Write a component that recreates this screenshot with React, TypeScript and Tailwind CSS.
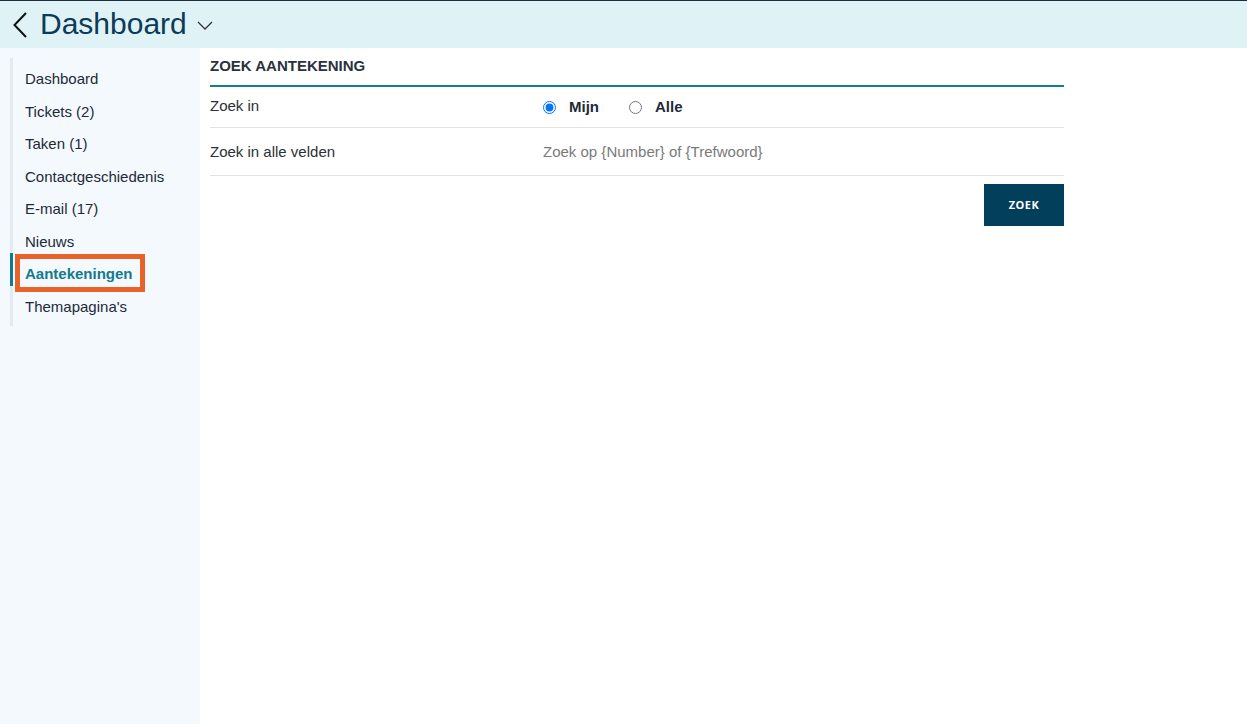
import { useState } from "react";

const items = [
  "Dashboard",
  "Tickets (2)",
  "Taken (1)",
  "Contactgeschiedenis",
  "E-mail (17)",
  "Nieuws",
  "Aantekeningen",
  "Themapagina's",
];

export default function App() {
  const [scope, setScope] = useState<string>("mijn");
  const active = "Aantekeningen";

  return (
    <div className="min-h-[724px] flex flex-col bg-white font-['Liberation_Sans',Arial,sans-serif]">
      {/* header */}
      <header className="h-[48px] border-t border-[#1c2b3a] bg-[#dff3f7] flex items-center">
        <svg width="40" height="47" viewBox="0 0 40 47" className="shrink-0">
          <path d="M26 12 L14.5 24 L26 36" fill="none" stroke="#111" strokeWidth="2" />
        </svg>
        <h1 className="text-[30px] leading-[36px] text-[#0d3b57] -mt-[2px]">Dashboard</h1>
        <svg width="26" height="20" viewBox="0 0 26 20" className="shrink-0 mt-[2px]">
          <path d="M11 6 L18 13 L25 6" fill="none" stroke="#333" strokeWidth="1.3" />
        </svg>
      </header>

      <div className="flex flex-1">
        {/* sidebar */}
        <aside className="w-[200px] shrink-0 bg-[#f3f9fd] pt-[10px] pl-[10px]">
          <nav className="border-l-[3px] border-[#e6eaee] pb-[8px]">
            {items.map((item) => (
              <div key={item} className="relative">
                <a
                  href="#"
                  className={
                    item === active
                      ? "block h-[32.5px] pt-[9px] pl-[12px] -ml-[3px] border-l-[3px] border-[#0f7c95] text-[15px] leading-[23px] font-bold text-[#137a8f]"
                      : "block h-[32.5px] pt-[9px] pl-[12px] text-[15px] leading-[23px] text-[#1e2a3a]"
                  }
                >
                  {item}
                </a>
                {item === active && (
                  <div className="absolute left-[2px] top-[1px] w-[130px] h-[38px] border-[5px] border-[#e8632a] pointer-events-none" />
                )}
              </div>
            ))}
          </nav>
        </aside>

        {/* main */}
        <main className="flex-1 pl-[10px]">
          <div className="w-[854px]">
            <div className="pt-[8px] pb-[9px] border-b-2 border-[#137f97]">
              <h2 className="text-[15px] leading-[20px] font-bold text-[#2a3140]">ZOEK AANTEKENING</h2>
            </div>

            <div className="grid grid-cols-[333px_1fr] h-[41px] items-center border-b border-[#e3e3e3] text-[15px] text-[#2b2f36]">
              <span className="-mt-[2px]">Zoek in</span>
              <div className="flex items-center">
                <label className="flex items-center gap-[13px] cursor-pointer">
                  <input
                    type="radio"
                    name="scope"
                    checked={scope === "mijn"}
                    onChange={() => setScope("mijn")}
                    className="m-0 w-[13px] h-[13px] accent-[#0075ff]"
                  />
                  <span className="font-bold text-[#1e2a3a]">Mijn</span>
                </label>
                <label className="flex items-center gap-[13px] ml-[30px] cursor-pointer">
                  <input
                    type="radio"
                    name="scope"
                    checked={scope === "alle"}
                    onChange={() => setScope("alle")}
                    className="m-0 w-[13px] h-[13px] accent-[#0075ff]"
                  />
                  <span className="font-bold text-[#1e2a3a]">Alle</span>
                </label>
              </div>
            </div>

            <div className="grid grid-cols-[333px_1fr] h-[48px] items-center border-b border-[#e3e3e3] text-[15px]">
              <span className="text-[#2b2f36] mt-[1px]">Zoek in alle velden</span>
              <input
                type="text"
                placeholder="Zoek op {Number} of {Trefwoord}"
                className="w-full bg-transparent outline-none text-[15px] text-[#333] placeholder:text-[#7a7a7a] mt-[1px]"
              />
            </div>

            <div className="flex justify-end mt-[8px]">
              <button className="w-[80px] h-[42px] bg-[#023f5a] text-white text-[11px] font-bold tracking-[0.5px] font-['Open_Sans',sans-serif]">
                ZOEK
              </button>
            </div>
          </div>
        </main>
      </div>
    </div>
  );
}
